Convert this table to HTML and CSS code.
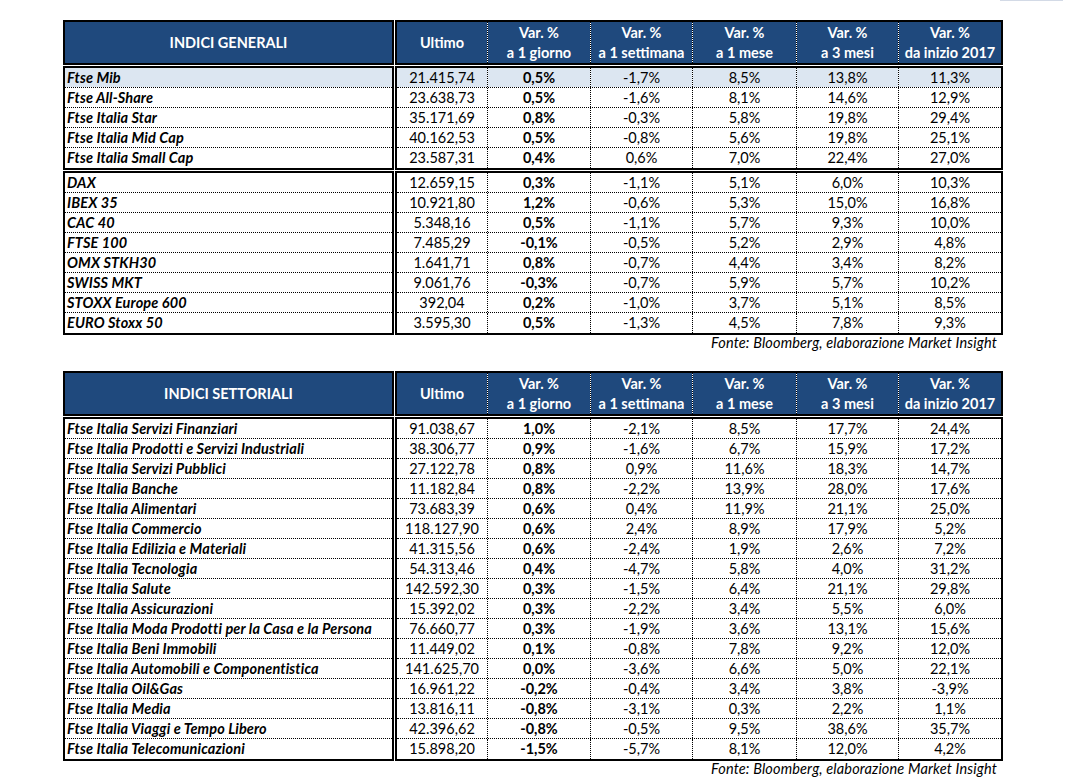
FILE: index.html
```html
<!DOCTYPE html>
<html lang="it">
<head>
<meta charset="utf-8">
<title>Indici</title>
<link rel="stylesheet" href="styles.css">
</head>
<body>
<div class="topline"></div>
<div class="report">
  <section class="table">
    <div class="band head">
      <div class="namebox"><div class="hname">INDICI GENERALI</div></div>
      <div class="databox">
        <div class="hrow">
          <div class="hcell">Ultimo</div>
          <div class="hcell"><span>Var. %</span><span>a 1 giorno</span></div>
          <div class="hcell"><span>Var. %</span><span>a 1 settimana</span></div>
          <div class="hcell"><span>Var. %</span><span>a 1 mese</span></div>
          <div class="hcell"><span>Var. %</span><span>a 3 mesi</span></div>
          <div class="hcell"><span>Var. %</span><span>da inizio 2017</span></div>
        </div>
      </div>
    </div>
    <div class="band">
      <div class="namebox">
        <div class="nrow hl">Ftse Mib</div>
        <div class="nrow">Ftse All-Share</div>
        <div class="nrow">Ftse Italia Star</div>
        <div class="nrow">Ftse Italia Mid Cap</div>
        <div class="nrow">Ftse Italia Small Cap</div>
      </div>
      <div class="databox">
        <div class="drow hl"><span>21.415,74</span><span class="b">0,5%</span><span>-1,7%</span><span>8,5%</span><span>13,8%</span><span>11,3%</span></div>
        <div class="drow"><span>23.638,73</span><span class="b">0,5%</span><span>-1,6%</span><span>8,1%</span><span>14,6%</span><span>12,9%</span></div>
        <div class="drow"><span>35.171,69</span><span class="b">0,8%</span><span>-0,3%</span><span>5,8%</span><span>19,8%</span><span>29,4%</span></div>
        <div class="drow"><span>40.162,53</span><span class="b">0,5%</span><span>-0,8%</span><span>5,6%</span><span>19,8%</span><span>25,1%</span></div>
        <div class="drow"><span>23.587,31</span><span class="b">0,4%</span><span>0,6%</span><span>7,0%</span><span>22,4%</span><span>27,0%</span></div>
      </div>
    </div>
    <div class="band">
      <div class="namebox">
        <div class="nrow">DAX</div>
        <div class="nrow">IBEX 35</div>
        <div class="nrow">CAC 40</div>
        <div class="nrow">FTSE 100</div>
        <div class="nrow">OMX STKH30</div>
        <div class="nrow">SWISS MKT</div>
        <div class="nrow">STOXX Europe 600</div>
        <div class="nrow">EURO Stoxx 50</div>
      </div>
      <div class="databox">
        <div class="drow"><span>12.659,15</span><span class="b">0,3%</span><span>-1,1%</span><span>5,1%</span><span>6,0%</span><span>10,3%</span></div>
        <div class="drow"><span>10.921,80</span><span class="b">1,2%</span><span>-0,6%</span><span>5,3%</span><span>15,0%</span><span>16,8%</span></div>
        <div class="drow"><span>5.348,16</span><span class="b">0,5%</span><span>-1,1%</span><span>5,7%</span><span>9,3%</span><span>10,0%</span></div>
        <div class="drow"><span>7.485,29</span><span class="b">-0,1%</span><span>-0,5%</span><span>5,2%</span><span>2,9%</span><span>4,8%</span></div>
        <div class="drow"><span>1.641,71</span><span class="b">0,8%</span><span>-0,7%</span><span>4,4%</span><span>3,4%</span><span>8,2%</span></div>
        <div class="drow"><span>9.061,76</span><span class="b">-0,3%</span><span>-0,7%</span><span>5,9%</span><span>5,7%</span><span>10,2%</span></div>
        <div class="drow"><span>392,04</span><span class="b">0,2%</span><span>-1,0%</span><span>3,7%</span><span>5,1%</span><span>8,5%</span></div>
        <div class="drow"><span>3.595,30</span><span class="b">0,5%</span><span>-1,3%</span><span>4,5%</span><span>7,8%</span><span>9,3%</span></div>
      </div>
    </div>
  </section>
  <p class="source">Fonte: Bloomberg, elaborazione Market Insight</p>

  <section class="table">
    <div class="band head">
      <div class="namebox"><div class="hname">INDICI SETTORIALI</div></div>
      <div class="databox">
        <div class="hrow">
          <div class="hcell">Ultimo</div>
          <div class="hcell"><span>Var. %</span><span>a 1 giorno</span></div>
          <div class="hcell"><span>Var. %</span><span>a 1 settimana</span></div>
          <div class="hcell"><span>Var. %</span><span>a 1 mese</span></div>
          <div class="hcell"><span>Var. %</span><span>a 3 mesi</span></div>
          <div class="hcell"><span>Var. %</span><span>da inizio 2017</span></div>
        </div>
      </div>
    </div>
    <div class="band">
      <div class="namebox">
        <div class="nrow">Ftse Italia Servizi Finanziari</div>
        <div class="nrow">Ftse Italia Prodotti e Servizi Industriali</div>
        <div class="nrow">Ftse Italia Servizi Pubblici</div>
        <div class="nrow">Ftse Italia Banche</div>
        <div class="nrow">Ftse Italia Alimentari</div>
        <div class="nrow">Ftse Italia Commercio</div>
        <div class="nrow">Ftse Italia Edilizia e Materiali</div>
        <div class="nrow">Ftse Italia Tecnologia</div>
        <div class="nrow">Ftse Italia Salute</div>
        <div class="nrow">Ftse Italia Assicurazioni</div>
        <div class="nrow">Ftse Italia Moda Prodotti per la Casa e la Persona</div>
        <div class="nrow">Ftse Italia Beni Immobili</div>
        <div class="nrow">Ftse Italia Automobili e Componentistica</div>
        <div class="nrow">Ftse Italia Oil&amp;Gas</div>
        <div class="nrow">Ftse Italia Media</div>
        <div class="nrow">Ftse Italia Viaggi e Tempo Libero</div>
        <div class="nrow">Ftse Italia Telecomunicazioni</div>
      </div>
      <div class="databox">
        <div class="drow"><span>91.038,67</span><span class="b">1,0%</span><span>-2,1%</span><span>8,5%</span><span>17,7%</span><span>24,4%</span></div>
        <div class="drow"><span>38.306,77</span><span class="b">0,9%</span><span>-1,6%</span><span>6,7%</span><span>15,9%</span><span>17,2%</span></div>
        <div class="drow"><span>27.122,78</span><span class="b">0,8%</span><span>0,9%</span><span>11,6%</span><span>18,3%</span><span>14,7%</span></div>
        <div class="drow"><span>11.182,84</span><span class="b">0,8%</span><span>-2,2%</span><span>13,9%</span><span>28,0%</span><span>17,6%</span></div>
        <div class="drow"><span>73.683,39</span><span class="b">0,6%</span><span>0,4%</span><span>11,9%</span><span>21,1%</span><span>25,0%</span></div>
        <div class="drow"><span>118.127,90</span><span class="b">0,6%</span><span>2,4%</span><span>8,9%</span><span>17,9%</span><span>5,2%</span></div>
        <div class="drow"><span>41.315,56</span><span class="b">0,6%</span><span>-2,4%</span><span>1,9%</span><span>2,6%</span><span>7,2%</span></div>
        <div class="drow"><span>54.313,46</span><span class="b">0,4%</span><span>-4,7%</span><span>5,8%</span><span>4,0%</span><span>31,2%</span></div>
        <div class="drow"><span>142.592,30</span><span class="b">0,3%</span><span>-1,5%</span><span>6,4%</span><span>21,1%</span><span>29,8%</span></div>
        <div class="drow"><span>15.392,02</span><span class="b">0,3%</span><span>-2,2%</span><span>3,4%</span><span>5,5%</span><span>6,0%</span></div>
        <div class="drow"><span>76.660,77</span><span class="b">0,3%</span><span>-1,9%</span><span>3,6%</span><span>13,1%</span><span>15,6%</span></div>
        <div class="drow"><span>11.449,02</span><span class="b">0,1%</span><span>-0,8%</span><span>7,8%</span><span>9,2%</span><span>12,0%</span></div>
        <div class="drow"><span>141.625,70</span><span class="b">0,0%</span><span>-3,6%</span><span>6,6%</span><span>5,0%</span><span>22,1%</span></div>
        <div class="drow"><span>16.961,22</span><span class="b">-0,2%</span><span>-0,4%</span><span>3,4%</span><span>3,8%</span><span>-3,9%</span></div>
        <div class="drow"><span>13.816,11</span><span class="b">-0,8%</span><span>-3,1%</span><span>0,3%</span><span>2,2%</span><span>1,1%</span></div>
        <div class="drow"><span>42.396,62</span><span class="b">-0,8%</span><span>-0,5%</span><span>9,5%</span><span>38,6%</span><span>35,7%</span></div>
        <div class="drow"><span>15.898,20</span><span class="b">-1,5%</span><span>-5,7%</span><span>8,1%</span><span>12,0%</span><span>4,2%</span></div>
      </div>
    </div>
  </section>
  <p class="source">Fonte: Bloomberg, elaborazione Market Insight</p>
</div>
</body>
</html>
```

FILE: styles.css
```css
* { box-sizing: border-box; }

body {
  margin: 0;
  background: #fff;
  color: #000;
  font-family: Lato, "Liberation Sans", sans-serif;
  font-size: 14.5px;
}

.topline {
  height: 1px;
  width: 63px;
  margin-left: 1000px;
  background: #d3dae6;
}

.report {
  margin: 19px 0 0 63px;
  width: 940px;
}

.band {
  display: flex;
  gap: 1px;
}

.band + .band {
  margin-top: 1px;
}

.namebox {
  width: 331px;
  border: 2px solid #000;
  background: #fff;
}

.databox {
  width: 608px;
  border: 2px solid #000;
  background: #fff;
}

.head .namebox {
  background: #1f497d;
}

.hname {
  height: 41px;
  display: flex;
  align-items: center;
  justify-content: center;
  color: #fff;
  font-weight: 700;
}

.hrow,
.drow {
  display: grid;
  grid-template-columns: 91px 103px 102px 104px 102px 102px;
}

.hrow {
  height: 41px;
}

.hcell {
  background: #1f497d;
  background-clip: padding-box;
  border-right: 1px dotted #000;
  color: #fff;
  font-weight: 700;
  display: flex;
  flex-direction: column;
  align-items: center;
  justify-content: center;
  line-height: 20px;
}

.hcell:last-child {
  border-right: 0;
}

.nrow {
  height: 20px;
  padding-left: 2px;
  border-bottom: 1px dotted #000;
  background-clip: padding-box;
  font-weight: 700;
  font-style: italic;
  line-height: 19px;
  letter-spacing: 0.12px;
  white-space: nowrap;
}

.drow {
  height: 20px;
  border-bottom: 1px dotted #000;
}

.nrow:last-child,
.drow:last-child {
  border-bottom: 0;
}

.drow > span {
  text-align: center;
  line-height: 19px;
  border-right: 1px dotted #000;
  background-clip: padding-box;
  white-space: nowrap;
}

.drow > span:last-child {
  border-right: 0;
}

.drow .b {
  font-weight: 700;
}

.nrow.hl {
  background-color: #dce6f1;
}

.drow.hl > span {
  background-color: #dce6f1;
}

.source {
  margin: 0;
  height: 36px;
  padding-right: 6px;
  text-align: right;
  font-style: italic;
  line-height: 16px;
  letter-spacing: 0.15px;
}
```
